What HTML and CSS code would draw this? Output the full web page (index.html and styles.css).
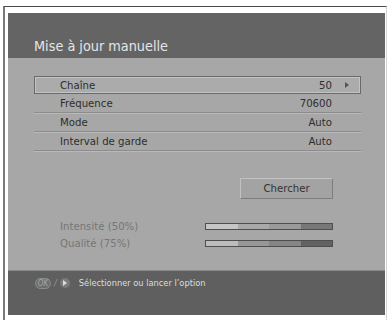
FILE: index.html
```html
<!DOCTYPE html>
<html lang="fr">
<head>
    <meta charset="UTF-8">
    <meta name="viewport" content="width=device-width, initial-scale=1.0">
    <title>Mise à jour manuelle</title>
    <link rel="stylesheet" href="styles.css">
</head>
<body>
    <div class="tv">
        <div class="screen">
            <div class="header">
                <div class="title">Mise à jour manuelle</div>
            </div>

            <div class="content">
                <div class="menu">
                    <div class="row selected">
                        <span class="label">Chaîne</span>
                        <span class="value">50</span>
                        <span class="arrow"></span>
                    </div>
                    <div class="row">
                        <span class="label">Fréquence</span>
                        <span class="value">70600</span>
                        <span class="slot"></span>
                    </div>
                    <div class="row">
                        <span class="label">Mode</span>
                        <span class="value">Auto</span>
                        <span class="slot"></span>
                    </div>
                    <div class="row">
                        <span class="label">Interval de garde</span>
                        <span class="value">Auto</span>
                        <span class="slot"></span>
                    </div>
                </div>

                <div class="actions">
                    <div class="button">Chercher</div>
                </div>

                <div class="signal">
                    <div class="signal-row">
                        <span class="signal-label">Intensité (50%)</span>
                        <div class="bar bar-strength">
                            <span></span><span></span><span></span><span></span>
                        </div>
                    </div>
                    <div class="signal-row">
                        <span class="signal-label">Qualité (75%)</span>
                        <div class="bar bar-quality">
                            <span></span><span></span><span></span><span></span>
                        </div>
                    </div>
                </div>
            </div>

            <div class="footer">
                <span class="key-ok">OK</span>
                <span class="slash">/</span>
                <span class="key-right"></span>
                <span class="hint">Sélectionner ou lancer l’option</span>
            </div>
        </div>
    </div>
</body>
</html>
```

FILE: styles.css
```css
* {
    margin: 0;
    padding: 0;
    box-sizing: border-box;
}

body {
    background: #ffffff;
    font-family: 'DejaVu Sans Condensed', 'DejaVu Sans', sans-serif;
    width: 389px;
    height: 320px;
    overflow: hidden;
}

.tv {
    margin: 6px 2px 0 3px;
    border-top: 1px solid #4a4a4a;
    border-left: 2px solid #7a7a7a;
    border-right: 1px solid #d4d4d4;
    padding: 6px 1px 0 3px;
    height: 314px;
}

.screen {
    width: 377px;
    height: 302px;
    display: flex;
    flex-direction: column;
    background: #a7a7a7;
}

.header {
    height: 45px;
    background: #646464;
    display: flex;
    align-items: flex-end;
    padding: 0 0 4px 26px;
}

.title {
    color: #e6e6e6;
    font-size: 14.3px;
    line-height: 16px;
}

.content {
    flex: 1;
    padding-top: 18px;
}

.menu {
    margin-left: 26px;
    width: 327px;
}

.row {
    display: flex;
    align-items: center;
    height: 19px;
    padding-left: 26px;
    font-size: 11.3px;
    color: #2e2e2e;
    border-bottom: 1px solid #8c8c8c;
    box-shadow: 0 1px 0 #b9b9b9;
}

.row.selected {
    height: 18px;
    border: 1px solid #6a6a6a;
    box-shadow: inset 1px 1px 0 #c4c4c4, inset -1px -1px 0 #c4c4c4;
    background: #ababab;
    padding-left: 25px;
}

.label {
    flex: 1;
}

.value {
    text-align: right;
}

.slot,
.arrow {
    width: 29px;
    display: flex;
    justify-content: center;
    padding-left: 2px;
}

.row.selected .arrow {
    width: 28px;
}

.arrow::before {
    content: '';
    border-left: 4px solid #555555;
    border-top: 3px solid transparent;
    border-bottom: 3px solid transparent;
}

.actions {
    display: flex;
    justify-content: flex-end;
    padding: 27px 52px 0 0;
}

.button {
    width: 93px;
    height: 21px;
    border: 1px solid #7e7e7e;
    border-top-color: #c2c2c2;
    border-left-color: #c2c2c2;
    background: #a3a3a3;
    color: #333333;
    font-size: 11.3px;
    display: flex;
    align-items: center;
    justify-content: center;
}

.signal {
    padding: 19px 0 0 52px;
}

.signal-row {
    display: flex;
    align-items: center;
    height: 17px;
}

.signal-label {
    width: 145px;
    font-size: 11.3px;
    color: #767676;
}

.bar {
    width: 128px;
    height: 7px;
    border: 1px solid #4e4e4e;
    display: flex;
}

.bar span {
    flex: 1;
}

.bar-strength span:nth-child(1) { background: #c6c6c6; }
.bar-strength span:nth-child(2) { background: #a9a9a9; }
.bar-strength span:nth-child(3) { background: #9a9a9a; }
.bar-strength span:nth-child(4) { background: #777777; }

.bar-quality span:nth-child(1) { background: #bdbdbd; }
.bar-quality span:nth-child(2) { background: #979797; }
.bar-quality span:nth-child(3) { background: #858585; }
.bar-quality span:nth-child(4) { background: #626262; }

.footer {
    height: 45px;
    background: #5f5f5f;
    border-top: 1px solid #8a8a8a;
    display: flex;
    align-items: flex-start;
    padding: 6px 0 0 27px;
    color: #dedede;
    font-size: 9.2px;
    line-height: 12px;
}

.key-ok {
    width: 16px;
    height: 11px;
    margin-top: 1px;
    border-radius: 6px;
    background: #6e6e6e;
    border: 1px solid #8e8e8e;
    color: #a8a8a8;
    font-size: 8px;
    font-style: italic;
    line-height: 9px;
    text-align: center;
}

.slash {
    margin: 0 3px;
    color: #9a9a9a;
    font-style: italic;
}

.key-right {
    width: 10px;
    height: 10px;
    margin-top: 1px;
    border-radius: 50%;
    background: #7a7a7a;
    display: flex;
    align-items: center;
    justify-content: center;
    padding-left: 1px;
}

.key-right::before {
    content: '';
    border-left: 4px solid #dcdcdc;
    border-top: 3px solid transparent;
    border-bottom: 3px solid transparent;
}

.hint {
    margin-left: 9px;
}
```
